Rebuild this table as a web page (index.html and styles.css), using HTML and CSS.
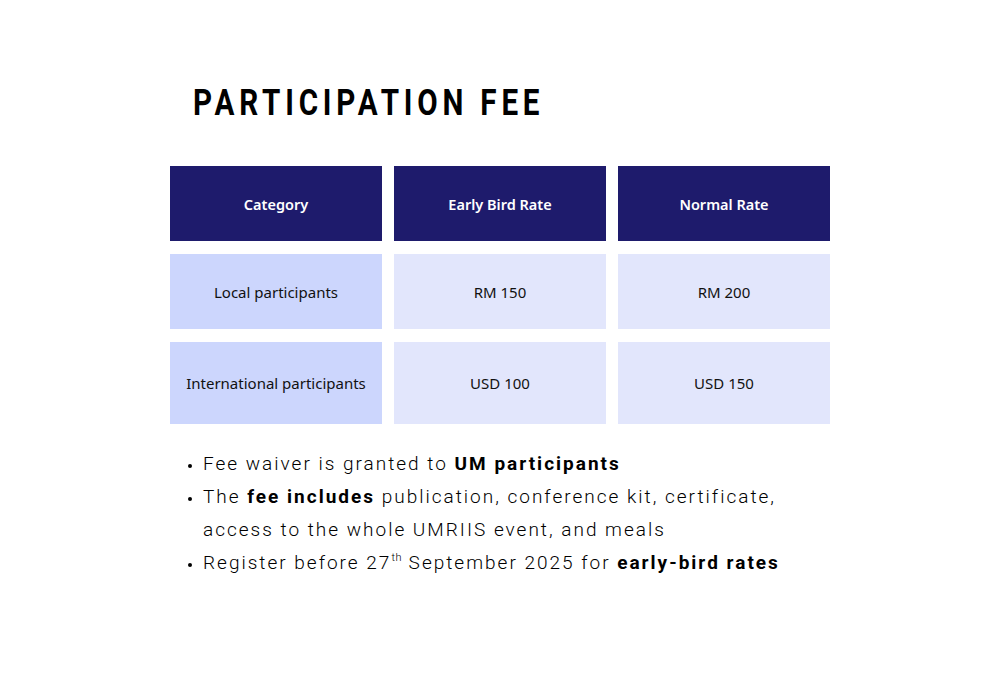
FILE: index.html
```html
<!DOCTYPE html>
<html>
<head>
<meta charset="utf-8">
<link rel="stylesheet" href="styles.css">
</head>
<body>
<main class="page">
  <h1 class="title">PARTICIPATION FEE</h1>
  <div class="fee-table">
    <div class="cell head">Category</div>
    <div class="cell head">Early Bird Rate</div>
    <div class="cell head">Normal Rate</div>
    <div class="cell cat">Local participants</div>
    <div class="cell val">RM 150</div>
    <div class="cell val">RM 200</div>
    <div class="cell cat tall">International participants</div>
    <div class="cell val tall">USD 100</div>
    <div class="cell val tall">USD 150</div>
  </div>
  <ul class="notes">
    <li>Fee waiver is granted to <b>UM participants</b></li>
    <li>The <b>fee includes</b> publication, conference kit, certificate, access to the whole UMRIIS event, and meals</li>
    <li>Register before 27<sup>th</sup> September 2025 for <b>early-bird rates</b></li>
  </ul>
</main>
</body>
</html>
```
FILE: styles.css
```css
html, body {
  margin: 0;
  padding: 0;
  background: #ffffff;
}
.page {
  width: 1000px;
  height: 700px;
  box-sizing: border-box;
  padding: 84px 0 0 170px;
}
.title {
  margin: 0 0 44px 23px;
  font-family: Roboto, "Liberation Sans", sans-serif;
  font-weight: 700;
  font-size: 37px;
  line-height: 38px;
  letter-spacing: 6px;
  color: #000;
  transform: scaleX(0.8);
  transform-origin: left center;
  white-space: nowrap;
}
.fee-table {
  display: grid;
  grid-template-columns: 212px 212px 212px;
  grid-template-rows: 75px 75px 82px;
  column-gap: 12px;
  row-gap: 13px;
}
.cell {
  display: flex;
  align-items: center;
  justify-content: center;
  font-family: "Noto Sans", "Open Sans", sans-serif;
  font-size: 15px;
  color: #111;
}
.head {
  background: #1e1b6c;
  color: #fff;
  font-weight: 600;
  font-size: 14.5px;
}
.cat {
  background: #ccd6fd;
}
.val {
  background: #e2e6fc;
}
.notes {
  margin: 23px 0 0 0;
  padding: 0 0 0 33px;
  width: 600px;
  font-family: Roboto, "Liberation Sans", sans-serif;
  font-weight: 300;
  font-size: 19px;
  line-height: 33px;
  letter-spacing: 2px;
  color: #000;
}
.notes li::marker {
  font-size: 13px;
}
.notes b {
  font-weight: 700;
  letter-spacing: 2px;
}
.notes sup {
  font-size: 11px;
  line-height: 0;
  letter-spacing: 0.5px;
  vertical-align: 8px;
}
```
